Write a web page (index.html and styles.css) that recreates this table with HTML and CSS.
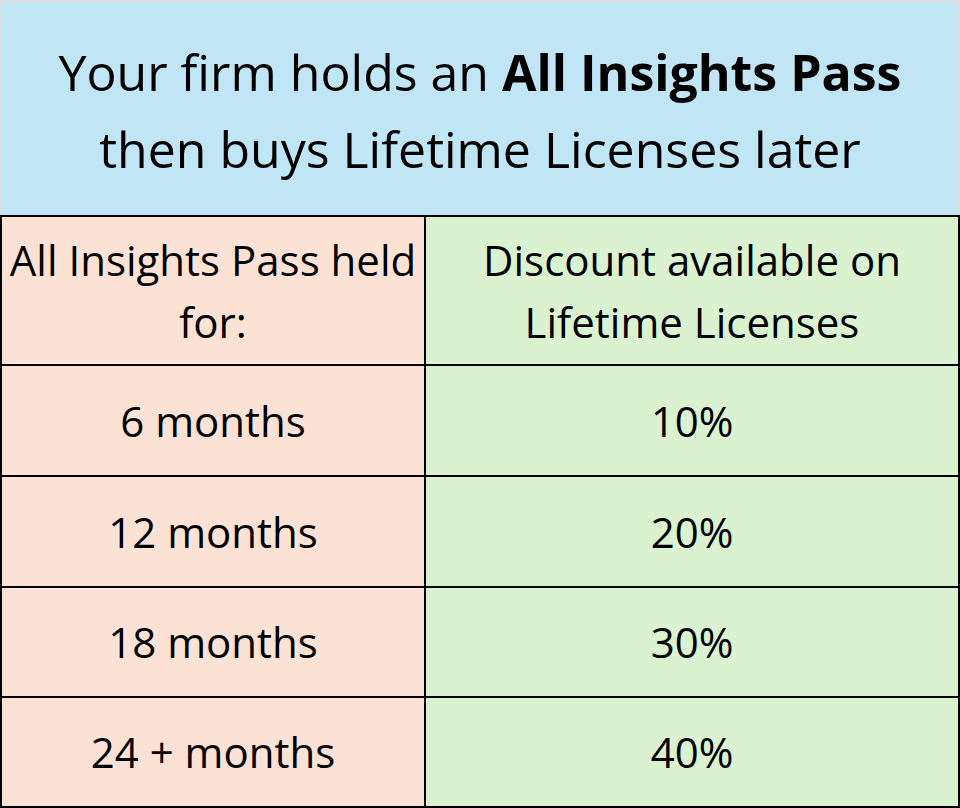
FILE: index.html
```html
<!DOCTYPE html>
<html>
<head>
<meta charset="utf-8">
<link rel="stylesheet" href="styles.css">
</head>
<body>
<div class="sheet">
  <div class="title">
    <div>Your firm holds an <b>All Insights Pass</b></div>
    <div>then buys Lifetime Licenses later</div>
  </div>
  <div class="cell left head">All Insights Pass held<br>for:</div>
  <div class="cell right head">Discount available on<br>Lifetime Licenses</div>
  <div class="cell left">6 months</div>
  <div class="cell right">10%</div>
  <div class="cell left">12 months</div>
  <div class="cell right">20%</div>
  <div class="cell left">18 months</div>
  <div class="cell right">30%</div>
  <div class="cell left">24 + months</div>
  <div class="cell right">40%</div>
</div>
</body>
</html>
```

FILE: styles.css
```css
html, body {
  margin: 0;
  padding: 0;
  background: #dcdcdc;
}
body {
  width: 960px;
  height: 808px;
  overflow: hidden;
  font-family: "Open Sans", Lato, sans-serif;
  color: #000;
}
.sheet {
  box-sizing: border-box;
  width: 960px;
  height: 808px;
  padding: 2px 2px 2px 2px;
  display: grid;
  grid-template-columns: 422px 1fr;
  grid-template-rows: 213px 147px 109px 109px 108px 1fr;
  column-gap: 2px;
  row-gap: 2px;
  background: linear-gradient(#dcdcdc, #dcdcdc) top / 100% 215px no-repeat, #000;
}
.title {
  grid-column: 1 / 3;
  background: #c0e6f5;
  display: flex;
  flex-direction: column;
  justify-content: center;
  align-items: center;
  font-size: 50px;
  line-height: 77px;
  padding-top: 4px;
}
.title b {
  font-weight: 700;
}
.cell {
  display: flex;
  align-items: center;
  justify-content: center;
  text-align: center;
  font-size: 42px;
  line-height: 62px;
}
.left {
  background: #fbe2d5;
}
.right {
  background: #daf2d0;
}
```
